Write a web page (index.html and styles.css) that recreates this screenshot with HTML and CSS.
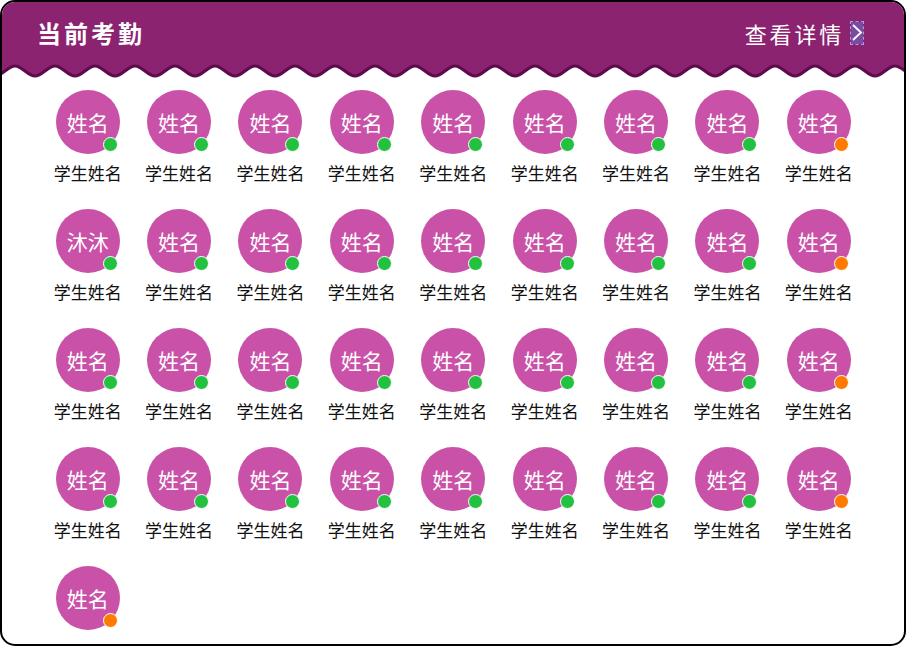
FILE: index.html
```html
<!DOCTYPE html>
<html lang="zh">
<head>
<meta charset="utf-8">
<link rel="stylesheet" href="styles.css">
</head>
<body>
<div class="card">
  <div class="header">
    <div class="bar">
      <div class="title">当前考勤</div>
      <div class="more">查看详情<span class="chev"><svg width="12" height="22" viewBox="0 0 12 22"><path d="M2 4 L10 11.5 L2 19" fill="none" stroke="#fff" stroke-width="1.8"/></svg></span></div>
    </div>
    <svg class="wave" width="902" height="20" viewBox="0 0 902 20">
      <path fill="#8b2370" stroke="#5e0b4d" stroke-width="3" d="M -7 -5 L -7 16 c 7.3 0 12.7 -10 20 -10 s 12.7 10 20 10 s 12.7 -10 20 -10 s 12.7 10 20 10 s 12.7 -10 20 -10 s 12.7 10 20 10 s 12.7 -10 20 -10 s 12.7 10 20 10 s 12.7 -10 20 -10 s 12.7 10 20 10 s 12.7 -10 20 -10 s 12.7 10 20 10 s 12.7 -10 20 -10 s 12.7 10 20 10 s 12.7 -10 20 -10 s 12.7 10 20 10 s 12.7 -10 20 -10 s 12.7 10 20 10 s 12.7 -10 20 -10 s 12.7 10 20 10 s 12.7 -10 20 -10 s 12.7 10 20 10 s 12.7 -10 20 -10 s 12.7 10 20 10 s 12.7 -10 20 -10 s 12.7 10 20 10 s 12.7 -10 20 -10 s 12.7 10 20 10 s 12.7 -10 20 -10 s 12.7 10 20 10 s 12.7 -10 20 -10 s 12.7 10 20 10 s 12.7 -10 20 -10 s 12.7 10 20 10 s 12.7 -10 20 -10 s 12.7 10 20 10 s 12.7 -10 20 -10 s 12.7 10 20 10 s 12.7 -10 20 -10 s 12.7 10 20 10 s 12.7 -10 20 -10 s 12.7 10 20 10 s 12.7 -10 20 -10 s 12.7 10 20 10 s 12.7 -10 20 -10 s 12.7 10 20 10 s 12.7 -10 20 -10 s 12.7 10 20 10 L 933 -5 Z"/>
    </svg>
  </div>
  <div class="grid">
    <div class="item"><div class="avatar">姓名<i class="dot on"></i></div><div class="name">学生姓名</div></div>
    <div class="item"><div class="avatar">姓名<i class="dot on"></i></div><div class="name">学生姓名</div></div>
    <div class="item"><div class="avatar">姓名<i class="dot on"></i></div><div class="name">学生姓名</div></div>
    <div class="item"><div class="avatar">姓名<i class="dot on"></i></div><div class="name">学生姓名</div></div>
    <div class="item"><div class="avatar">姓名<i class="dot on"></i></div><div class="name">学生姓名</div></div>
    <div class="item"><div class="avatar">姓名<i class="dot on"></i></div><div class="name">学生姓名</div></div>
    <div class="item"><div class="avatar">姓名<i class="dot on"></i></div><div class="name">学生姓名</div></div>
    <div class="item"><div class="avatar">姓名<i class="dot on"></i></div><div class="name">学生姓名</div></div>
    <div class="item"><div class="avatar">姓名<i class="dot off"></i></div><div class="name">学生姓名</div></div>

    <div class="item"><div class="avatar">沐沐<i class="dot on"></i></div><div class="name">学生姓名</div></div>
    <div class="item"><div class="avatar">姓名<i class="dot on"></i></div><div class="name">学生姓名</div></div>
    <div class="item"><div class="avatar">姓名<i class="dot on"></i></div><div class="name">学生姓名</div></div>
    <div class="item"><div class="avatar">姓名<i class="dot on"></i></div><div class="name">学生姓名</div></div>
    <div class="item"><div class="avatar">姓名<i class="dot on"></i></div><div class="name">学生姓名</div></div>
    <div class="item"><div class="avatar">姓名<i class="dot on"></i></div><div class="name">学生姓名</div></div>
    <div class="item"><div class="avatar">姓名<i class="dot on"></i></div><div class="name">学生姓名</div></div>
    <div class="item"><div class="avatar">姓名<i class="dot on"></i></div><div class="name">学生姓名</div></div>
    <div class="item"><div class="avatar">姓名<i class="dot off"></i></div><div class="name">学生姓名</div></div>

    <div class="item"><div class="avatar">姓名<i class="dot on"></i></div><div class="name">学生姓名</div></div>
    <div class="item"><div class="avatar">姓名<i class="dot on"></i></div><div class="name">学生姓名</div></div>
    <div class="item"><div class="avatar">姓名<i class="dot on"></i></div><div class="name">学生姓名</div></div>
    <div class="item"><div class="avatar">姓名<i class="dot on"></i></div><div class="name">学生姓名</div></div>
    <div class="item"><div class="avatar">姓名<i class="dot on"></i></div><div class="name">学生姓名</div></div>
    <div class="item"><div class="avatar">姓名<i class="dot on"></i></div><div class="name">学生姓名</div></div>
    <div class="item"><div class="avatar">姓名<i class="dot on"></i></div><div class="name">学生姓名</div></div>
    <div class="item"><div class="avatar">姓名<i class="dot on"></i></div><div class="name">学生姓名</div></div>
    <div class="item"><div class="avatar">姓名<i class="dot off"></i></div><div class="name">学生姓名</div></div>

    <div class="item"><div class="avatar">姓名<i class="dot on"></i></div><div class="name">学生姓名</div></div>
    <div class="item"><div class="avatar">姓名<i class="dot on"></i></div><div class="name">学生姓名</div></div>
    <div class="item"><div class="avatar">姓名<i class="dot on"></i></div><div class="name">学生姓名</div></div>
    <div class="item"><div class="avatar">姓名<i class="dot on"></i></div><div class="name">学生姓名</div></div>
    <div class="item"><div class="avatar">姓名<i class="dot on"></i></div><div class="name">学生姓名</div></div>
    <div class="item"><div class="avatar">姓名<i class="dot on"></i></div><div class="name">学生姓名</div></div>
    <div class="item"><div class="avatar">姓名<i class="dot on"></i></div><div class="name">学生姓名</div></div>
    <div class="item"><div class="avatar">姓名<i class="dot on"></i></div><div class="name">学生姓名</div></div>
    <div class="item"><div class="avatar">姓名<i class="dot off"></i></div><div class="name">学生姓名</div></div>

    <div class="item"><div class="avatar">姓名<i class="dot off"></i></div></div>
  </div>
</div>
</body>
</html>
```
FILE: styles.css
```css
html, body {
  margin: 0;
  padding: 0;
  background: #fff;
}
body {
  font-family: "Noto Sans CJK SC", "Noto Sans", sans-serif;
}
.card {
  box-sizing: border-box;
  width: 906px;
  height: 646px;
  border: 2px solid #000;
  border-radius: 15px;
  overflow: hidden;
  background: #fff;
}
.header {
  display: flex;
  flex-direction: column;
}
.bar {
  height: 58px;
  background: #8b2370;
  display: flex;
  align-items: center;
  justify-content: space-between;
  padding: 0 41px 0 35px;
}
.title {
  color: #fff;
  font-size: 24px;
  font-weight: 700;
  letter-spacing: 3px;
  line-height: 1;
  margin-top: 3px;
}
.more {
  color: #fff;
  font-size: 22px;
  letter-spacing: 2.8px;
  line-height: 1;
  display: flex;
  align-items: center;
  margin-top: 3px;
}
.chev {
  display: block;
  width: 12px;
  height: 22px;
  margin-left: 7px;
  box-sizing: border-box;
  background: rgba(110, 110, 200, 0.55);
  outline: 1px dashed rgba(170, 170, 240, 0.9);
}
.chev svg {
  display: block;
  margin-top: -1px;
}
.wave {
  display: block;
  width: 902px;
  height: 20px;
}
.grid {
  display: grid;
  grid-template-columns: repeat(9, 91.4px);
  row-gap: 26px;
  padding: 10px 0 0 40px;
}
.item {
  display: flex;
  flex-direction: column;
  align-items: center;
}
.avatar {
  position: relative;
  width: 64px;
  height: 64px;
  border-radius: 50%;
  background: #c952a8;
  color: #fff;
  font-size: 21px;
  display: flex;
  align-items: center;
  justify-content: center;
  line-height: 1;
}
.dot {
  position: absolute;
  left: 47px;
  top: 47px;
  width: 13px;
  height: 13px;
  border-radius: 50%;
  border: 1.5px solid #fff;
}
.dot.on { background: #22c13f; }
.dot.off { background: #ff7b00; }
.name {
  margin-top: 9px;
  font-size: 17px;
  line-height: 20px;
  color: #111;
}
```
